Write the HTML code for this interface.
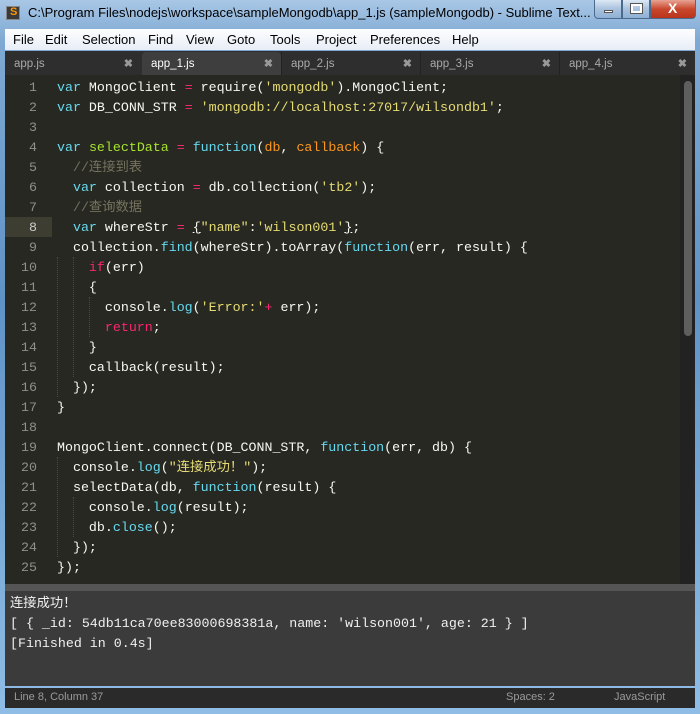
<!DOCTYPE html>
<html><head><meta charset="utf-8">
<style>
*{margin:0;padding:0;box-sizing:border-box}
body{width:700px;height:714px;overflow:hidden;background:#6d9cc8;font-family:"Liberation Sans","Noto Sans CJK SC",sans-serif;position:relative}
#frame{position:absolute;left:0;top:0;width:700px;height:714px;background:linear-gradient(#a9c7e6,#7fa9d3 40px,#5f92c6 300px,#8fbde6)}
#title{position:absolute;left:28px;top:5px;font-size:13px;color:#000;white-space:nowrap}
#icon{position:absolute;left:6px;top:6px;width:14px;height:14px;background:#3a3a3a;border:1px solid #888}
#icon:after{content:"S";position:absolute;left:3px;top:-1px;font-size:11px;color:#f90;font-weight:bold}
.btn{position:absolute;top:0;height:19px;border:1px solid #4a6a8e;border-top:none;border-radius:0 0 4px 4px;background:linear-gradient(#dce8f4,#a9c2de 50%,#8fb0d4)}
#menu{position:absolute;left:5px;top:29px;width:690px;height:21px;background:linear-gradient(#fdfdfe,#e8eef7);font-size:13px;color:#000}
#menu span{position:absolute;top:3px}
#tabs{position:absolute;left:5px;top:51px;width:690px;height:24px;background:#2e2e2e}
.tab{position:absolute;top:1px;height:23px;font-size:11.5px;color:#aaa;padding:6px 0 0 9px}
.tab b{position:absolute;right:8px;top:5px;color:#999;font-size:11px}
#editor{position:absolute;left:5px;top:75px;width:690px;height:509px;background:#272822;overflow:hidden}
.ln{position:absolute;left:0;width:32px;text-align:right;font:13.3px/20px "Liberation Mono",monospace;color:#8f908a;margin-top:-1px}
.cl{position:absolute;left:52px;font:13.3px/20px "Liberation Mono","Noto Sans CJK SC",monospace;color:#f8f8f2;white-space:pre;margin-top:-1px}
.k{color:#66d9ef}.o{color:#f92672}.s{color:#e6db74}.f{color:#a6e22e}.p{color:#fd971f}.c{color:#75715e}
.g{position:absolute;border-left:1px dotted #4a4a44;width:0}
#sep{position:absolute;left:5px;top:584px;width:690px;height:7px;background:#555}
#out{position:absolute;left:5px;top:591px;width:690px;height:95px;background:#3b3b3b;color:#f0f0f0;font:13.3px/20px "Liberation Mono","Noto Sans CJK SC",monospace}
#out div{position:absolute;left:5px;white-space:pre}
#status{position:absolute;left:5px;top:688px;width:690px;height:20px;background:#2a2a2a;font-size:11px;color:#9a9a9a}
</style></head><body>
<div id="frame"></div>
<div id="icon"></div>
<div id="title">C:\Program Files\nodejs\workspace\sampleMongodb\app_1.js (sampleMongodb) - Sublime Text...</div>
<div class="btn" style="left:594px;width:28px;border-radius:0 0 0 4px"><div style="position:absolute;left:9px;top:10px;width:9px;height:3px;background:#fff;border:1px solid #555"></div></div>
<div class="btn" style="left:622px;width:28px;border-radius:0"><div style="position:absolute;left:8px;top:4px;width:11px;height:9px;border:2px solid #fff;outline:1px solid #555"></div></div>
<div class="btn" style="left:650px;width:46px;border-radius:0 0 4px 0;background:linear-gradient(#e8a393,#c9482d 50%,#b8351c)"><div style="position:absolute;left:17px;top:0px;color:#fff;font-weight:bold;font-size:14px">X</div></div>
<div id="menu"><span style="left:8px">File</span><span style="left:40px">Edit</span><span style="left:77px">Selection</span><span style="left:143px">Find</span><span style="left:181px">View</span><span style="left:222px">Goto</span><span style="left:265px">Tools</span><span style="left:311px">Project</span><span style="left:365px">Preferences</span><span style="left:447px">Help</span></div>
<div id="tabs">
<div class="tab" style="left:0;width:136px">app.js<b>✖</b></div>
<div class="tab" style="left:137px;width:139px;background:#3e3e3e;color:#fff;border-radius:4px 4px 0 0">app_1.js<b>✖</b></div>
<div class="tab" style="left:276px;width:139px;border-left:1px solid #222">app_2.js<b>✖</b></div>
<div class="tab" style="left:415px;width:139px;border-left:1px solid #222">app_3.js<b>✖</b></div>
<div class="tab" style="left:554px;width:136px;border-left:1px solid #222">app_4.js<b>✖</b></div>
</div>
<div id="editor">
<div style="position:absolute;left:0;top:142px;width:47px;height:20px;background:#3e3d32"></div>
<div class="g" style="left:52px;top:182px;height:140px"></div>
<div class="g" style="left:68px;top:182px;height:120px"></div>
<div class="g" style="left:84px;top:222px;height:40px"></div>
<div class="g" style="left:52px;top:382px;height:100px"></div>
<div class="g" style="left:68px;top:422px;height:40px"></div>
<div style="position:absolute;left:675px;top:0;width:15px;height:509px;background:#222"></div>
<div style="position:absolute;left:679px;top:6px;width:8px;height:255px;background:#5e5e5e;border-radius:4px"></div>
</div>
<div id="code" style="position:absolute;left:5px;top:75px;width:670px;height:509px">
<div class="ln" style="top:4px">1</div><div class="cl" style="top:4px"><span class="k">var</span> MongoClient <span class="o">=</span> require(<span class="s">'mongodb'</span>).MongoClient;</div>
<div class="ln" style="top:24px">2</div><div class="cl" style="top:24px"><span class="k">var</span> DB_CONN_STR <span class="o">=</span> <span class="s">'mongodb://localhost:27017/wilsondb1'</span>;</div>
<div class="ln" style="top:44px">3</div>
<div class="ln" style="top:64px">4</div><div class="cl" style="top:64px"><span class="k">var</span> <span class="f">selectData</span> <span class="o">=</span> <span class="k">function</span>(<span class="p">db</span>, <span class="p">callback</span>) {</div>
<div class="ln" style="top:84px">5</div><div class="cl c" style="top:84px">  //连接到表</div>
<div class="ln" style="top:104px">6</div><div class="cl" style="top:104px">  <span class="k">var</span> collection <span class="o">=</span> db.collection(<span class="s">'tb2'</span>);</div>
<div class="ln" style="top:124px">7</div><div class="cl c" style="top:124px">  //查询数据</div>
<div class="ln" style="top:144px;color:#ccc">8</div><div class="cl" style="top:144px">  <span class="k">var</span> whereStr <span class="o">=</span> <u>{</u><span class="s">"name"</span>:<span class="s">'wilson001'</span><u>}</u>;</div>
<div class="ln" style="top:164px">9</div><div class="cl" style="top:164px">  collection.<span class="k">find</span>(whereStr).toArray(<span class="k">function</span>(err, result) {</div>
<div class="ln" style="top:184px">10</div><div class="cl" style="top:184px">    <span class="o">if</span>(err)</div>
<div class="ln" style="top:204px">11</div><div class="cl" style="top:204px">    {</div>
<div class="ln" style="top:224px">12</div><div class="cl" style="top:224px">      console.<span class="k">log</span>(<span class="s">'Error:'</span><span class="o">+</span> err);</div>
<div class="ln" style="top:244px">13</div><div class="cl" style="top:244px">      <span class="o">return</span>;</div>
<div class="ln" style="top:264px">14</div><div class="cl" style="top:264px">    }</div>
<div class="ln" style="top:284px">15</div><div class="cl" style="top:284px">    callback(result);</div>
<div class="ln" style="top:304px">16</div><div class="cl" style="top:304px">  });</div>
<div class="ln" style="top:324px">17</div><div class="cl" style="top:324px">}</div>
<div class="ln" style="top:344px">18</div>
<div class="ln" style="top:364px">19</div><div class="cl" style="top:364px">MongoClient.connect(DB_CONN_STR, <span class="k">function</span>(err, db) {</div>
<div class="ln" style="top:384px">20</div><div class="cl" style="top:384px">  console.<span class="k">log</span>(<span class="s">"连接成功！"</span>);</div>
<div class="ln" style="top:404px">21</div><div class="cl" style="top:404px">  selectData(db, <span class="k">function</span>(result) {</div>
<div class="ln" style="top:424px">22</div><div class="cl" style="top:424px">    console.<span class="k">log</span>(result);</div>
<div class="ln" style="top:444px">23</div><div class="cl" style="top:444px">    db.<span class="k">close</span>();</div>
<div class="ln" style="top:464px">24</div><div class="cl" style="top:464px">  });</div>
<div class="ln" style="top:484px">25</div><div class="cl" style="top:484px">});</div>
</div>
<div id="sep"></div>
<div id="out">
<div style="top:3px">连接成功！</div>
<div style="top:23px">[ { _id: 54db11ca70ee83000698381a, name: 'wilson001', age: 21 } ]</div>
<div style="top:43px">[Finished in 0.4s]</div>
</div>
<div id="status"><span style="position:absolute;left:9px;top:3px">Line 8, Column 37</span><span style="position:absolute;left:501px;top:3px">Spaces: 2</span><span style="position:absolute;left:609px;top:3px">JavaScript</span></div>
</body></html>
